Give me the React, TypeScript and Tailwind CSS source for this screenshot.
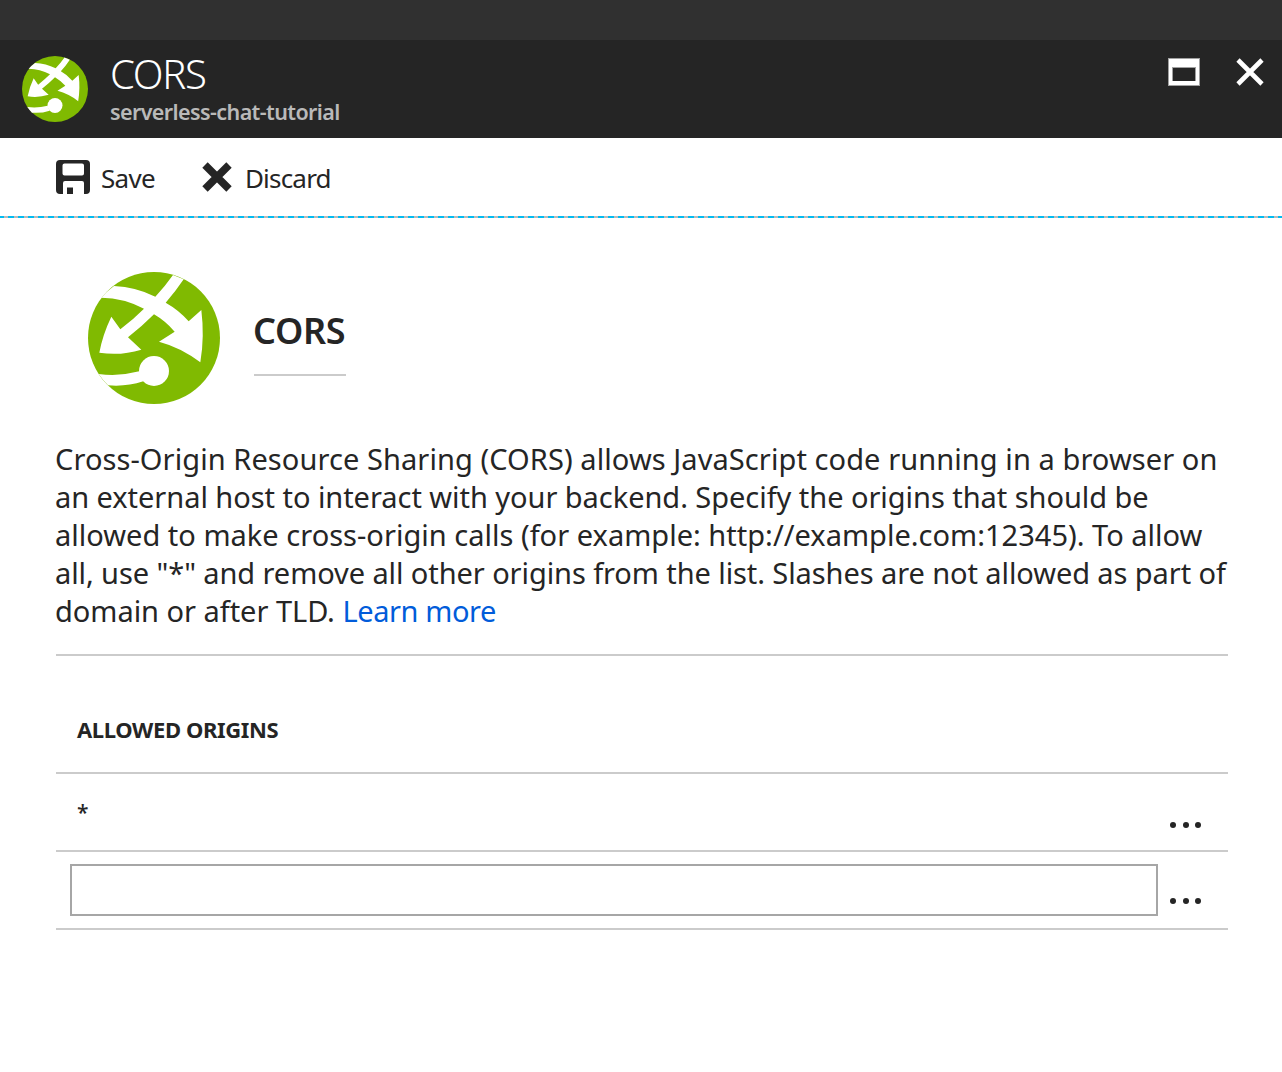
function CorsLogo({ className }: { className: string }) {
  return (
    <svg viewBox="24 36 396 396" className={className} aria-hidden="true">
      <circle cx="222" cy="234" r="198" fill="#80ba01" />
      <g fill="#fff">
        <path d="M102 78 Q168 81 226 110 Q256 78 279 45 L311 58 Q287 94 257 128 Q298 151 326 184 L364 150 Q374 230 361 307 Q304 263 237 245 L284 215 Q255 182 222 163 Q184 201 144 232 L184 269 Q122 288 58 278 Q68 224 94 170 L121 208 Q160 178 192 146 Q132 114 64 113 Q80 94 102 78 Z" />
        <path d="M56 342 Q118 350 178 334 L190 364 Q138 381 84 376 Q68 360 56 342 Z" />
        <circle cx="222" cy="333" r="45" />
      </g>
    </svg>
  );
}

function SaveIcon() {
  return (
    <svg viewBox="0 0 34 34" className="size-[34px]" aria-hidden="true">
      <path
        fill="#252525"
        fillRule="evenodd"
        d="M4 0H30Q34 0 34 4V30Q34 34 30 34H28V23Q28 21 26 21H9Q7 21 7 23V34H4Q0 34 0 30V4Q0 0 4 0ZM8.500 3.500Q6.500 3.500 6.500 5.500V13.500Q6.500 15.500 8.500 15.500H26Q28 15.500 28 13.500V5.500Q28 3.500 26 3.500Z"
      />
      <path fill="#252525" d="M11 27.500H17V34H11Z" />
    </svg>
  );
}

function DiscardIcon() {
  return (
    <svg viewBox="0 0 30 30" className="size-[30px]" aria-hidden="true">
      <path d="M3 3 27 27M27 3 3 27" stroke="#252525" strokeWidth="7.600" />
    </svg>
  );
}

function MoreButton() {
  return (
    <button type="button" aria-label="More" className="flex w-[31px] justify-between">
      <span className="size-[6px] rounded-full bg-[#252525]" />
      <span className="size-[6px] rounded-full bg-[#252525]" />
      <span className="size-[6px] rounded-full bg-[#252525]" />
    </button>
  );
}

export default function App() {
  return (
    <div className="min-h-[1072px] w-[1282px] bg-white font-['Noto_Sans',sans-serif] text-[#252525]">
      <div className="h-10 bg-[#303030]" />
      <header className="flex h-[98px] bg-[#252525] pl-[22px]">
        <CorsLogo className="mt-4 size-[66px]" />
        <div className="ml-[22px] pt-[9px]">
          <h1 className="h-[49px] text-[40px] leading-[50px] font-light tracking-[-1.300px] text-white">CORS</h1>
          <div className="text-[21.500px] leading-7 font-semibold tracking-[-0.600px] text-[#b9b9b9]">serverless-chat-tutorial</div>
        </div>
        <div className="mt-[18px] mr-[18px] ml-auto flex gap-9">
          <button type="button" aria-label="Maximize" className="h-7 w-8 border border-[#a0a0a0] bg-white px-[3px] pt-2 pb-1">
            <span className="block h-full border border-b-0 border-[#a0a0a0] bg-[#252525]" />
          </button>
          <button type="button" aria-label="Close" className="size-7">
            <svg viewBox="0 0 28 28" className="size-7" aria-hidden="true">
              <path d="M2 2 26 26M26 2 2 26" stroke="#fff" strokeWidth="4.600" />
            </svg>
          </button>
        </div>
      </header>

      <div className="flex h-[78px] items-center pl-14 text-[26px] leading-[30px]">
        <button type="button" className="flex items-center gap-[11px]">
          <SaveIcon />
          <span className="pt-[2px] tracking-[-0.7px]">Save</span>
        </button>
        <button type="button" className="ml-[47px] flex items-center gap-[13px]">
          <DiscardIcon />
          <span className="pt-[2px] tracking-[-0.8px]">Discard</span>
        </button>
      </div>
      <div className="h-[2px] bg-[repeating-linear-gradient(90deg,#00bcf2_0px,#00bcf2_4px,#b9b9b9_4px,#b9b9b9_8px,#00bcf2_8px,#00bcf2_10px)]" />

      <main className="ml-14 w-[1172px]">
        <div className="flex pt-[54px] pl-8">
          <CorsLogo className="size-[132px]" />
          <div className="ml-[34px] h-[104px] w-[92px] border-b-2 border-[#cbcbcb] pt-[35px]">
            <h2 className="-ml-px text-[36px] leading-[48px] font-semibold tracking-[-0.3px]">CORS</h2>
          </div>
        </div>

        <p className="mt-9 -ml-px text-[29px] leading-[38px] whitespace-nowrap">
          <span className="block tracking-[0.080px]">Cross-Origin Resource Sharing (CORS) allows JavaScript code running in a browser on</span>
          <span className="block tracking-[-0.045px]">an external host to interact with your backend. Specify the origins that should be</span>
          <span className="block tracking-[0.015px]">allowed to make cross-origin calls (for example: http://example.com:12345). To allow</span>
          <span className="block tracking-[-0.085px]">all, use "*" and remove all other origins from the list. Slashes are not allowed as part of</span>
          <span className="block tracking-[-0.030px]">
            domain or after TLD. <a className="tracking-[-0.400px] text-[#015cda]" href="#">Learn more</a>
          </span>
        </p>

        <section className="mt-6 border-t-2 border-[#cbcbcb]">
          <h3 className="h-[116px] pt-[59px] pl-[21px] text-[22px] leading-7 font-bold tracking-[-0.380px]">ALLOWED ORIGINS</h3>
          <div className="flex h-20 justify-between border-y-2 border-[#cbcbcb] pr-[27px] pl-[21px]">
            <span className="pt-6 text-[21px] leading-7 font-medium">*</span>
            <div className="pt-12">
              <MoreButton />
            </div>
          </div>
          <div className="flex h-[78px] border-b-2 border-[#cbcbcb] pt-3 pl-[14px]">
            <input type="text" aria-label="Origin" className="h-[52px] w-[1088px] border-2 border-[#a6a6a6] bg-white px-2 text-[22px] outline-none" />
            <div className="ml-3 pt-[34px]">
              <MoreButton />
            </div>
          </div>
        </section>
      </main>
    </div>
  );
}
